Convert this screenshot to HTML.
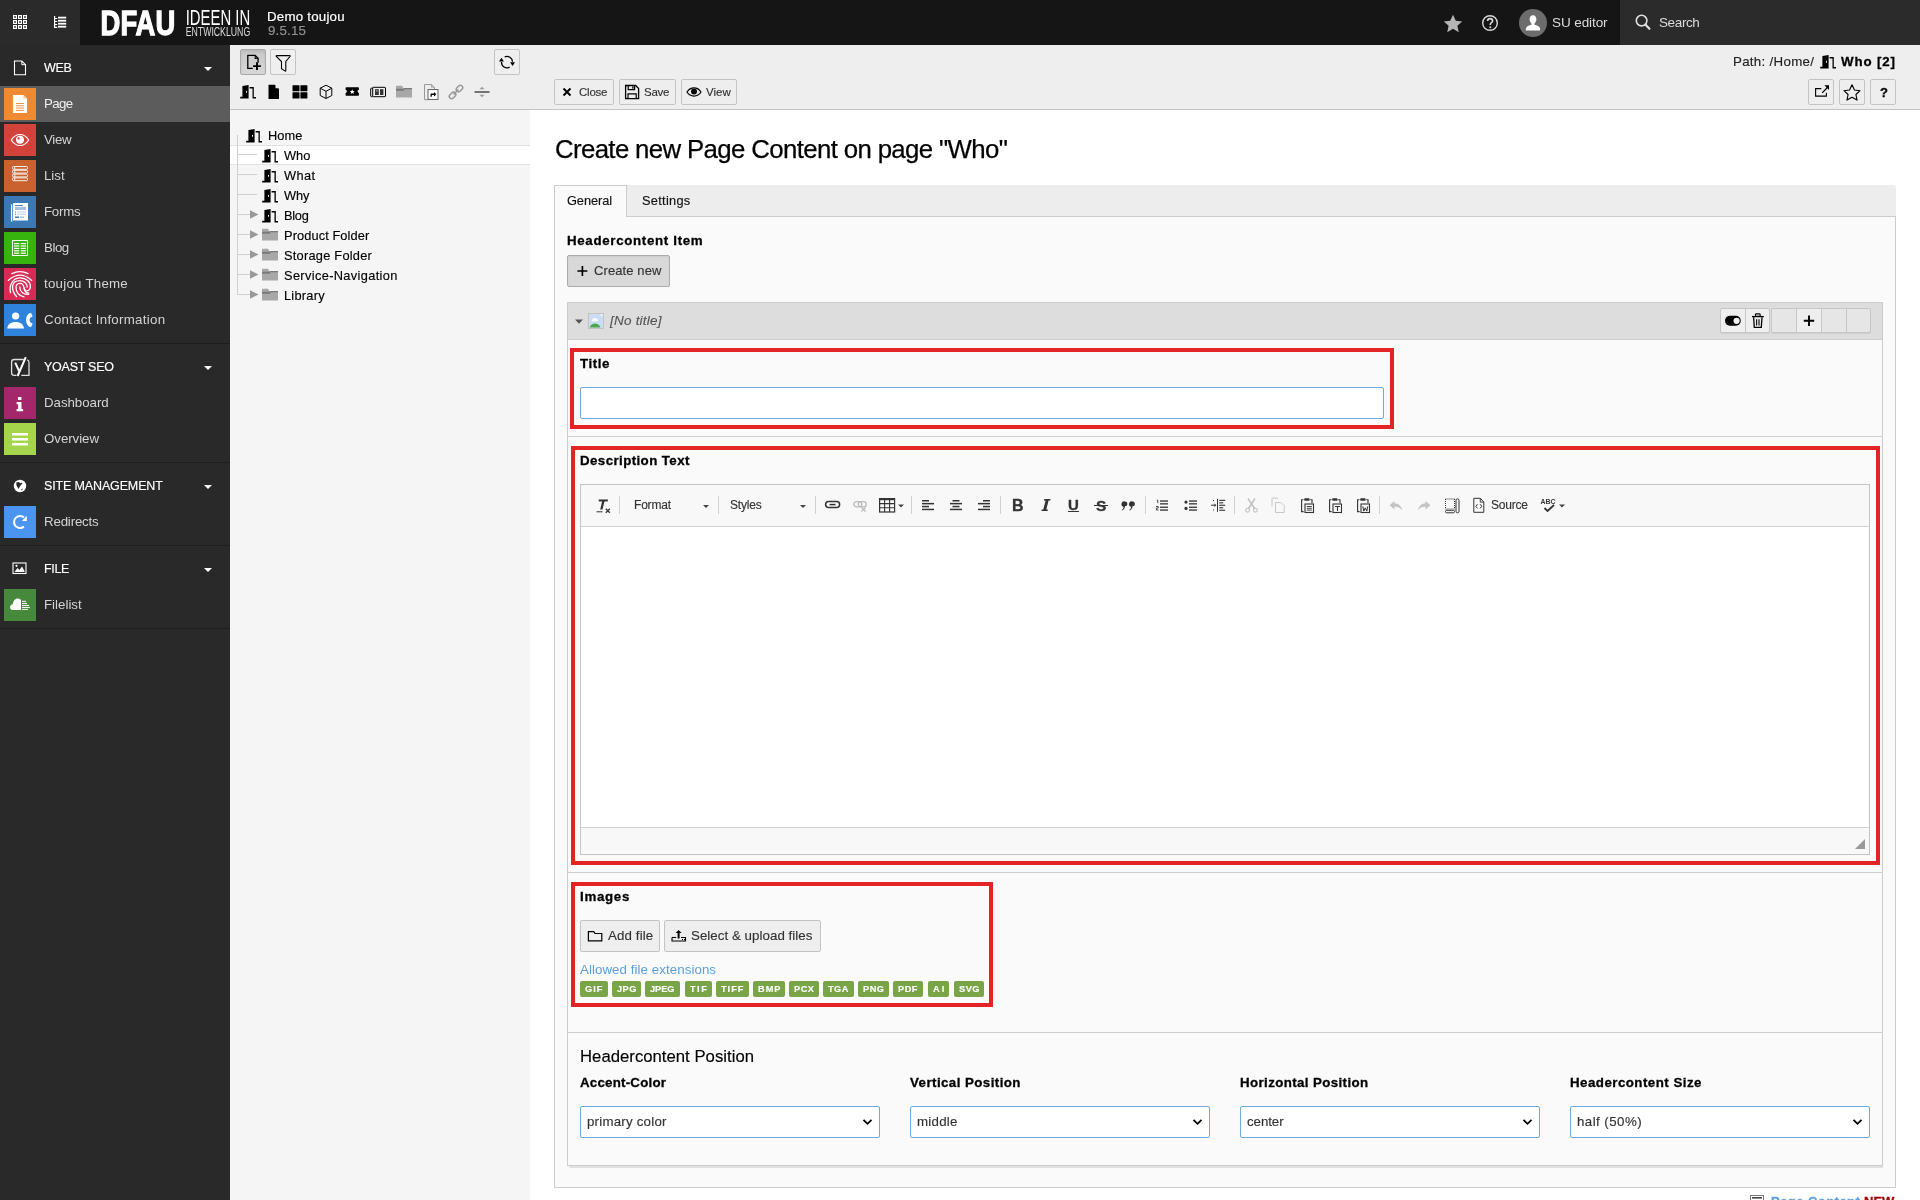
<!DOCTYPE html><html><head><meta charset="utf-8"><style>
*{box-sizing:border-box;margin:0;padding:0}
html,body{width:1920px;height:1200px;overflow:hidden;background:#fff;font-family:"Liberation Sans",sans-serif}
.a{position:absolute}
.t{position:absolute;white-space:nowrap;font-family:"Liberation Sans",sans-serif;will-change:transform}
svg.a{overflow:visible;will-change:transform}
</style></head><body><div class="a" style="left:0px;top:0px;width:1920px;height:45px;background:#151515"></div>
<div class="a" style="left:0px;top:0px;width:80px;height:45px;background:#2a2a2a"></div>
<div class="a" style="left:1620px;top:0px;width:300px;height:45px;background:#2b2b2b"></div>
<svg class="a" style="left:0px;top:0px;" width="40" height="45" viewBox="0 0 40 45"><rect x="13" y="15" width="4" height="4" fill="#fff"/><rect x="14.25" y="16.25" width="1.5" height="1.5" fill="#000"/><rect x="13" y="20" width="4" height="4" fill="#fff"/><rect x="14.25" y="21.25" width="1.5" height="1.5" fill="#000"/><rect x="13" y="25" width="4" height="4" fill="#fff"/><rect x="14.25" y="26.25" width="1.5" height="1.5" fill="#000"/><rect x="18" y="15" width="4" height="4" fill="#fff"/><rect x="19.25" y="16.25" width="1.5" height="1.5" fill="#000"/><rect x="18" y="20" width="4" height="4" fill="#fff"/><rect x="19.25" y="21.25" width="1.5" height="1.5" fill="#000"/><rect x="18" y="25" width="4" height="4" fill="#fff"/><rect x="19.25" y="26.25" width="1.5" height="1.5" fill="#000"/><rect x="23" y="15" width="4" height="4" fill="#fff"/><rect x="24.25" y="16.25" width="1.5" height="1.5" fill="#000"/><rect x="23" y="20" width="4" height="4" fill="#fff"/><rect x="24.25" y="21.25" width="1.5" height="1.5" fill="#000"/><rect x="23" y="25" width="4" height="4" fill="#fff"/><rect x="24.25" y="26.25" width="1.5" height="1.5" fill="#000"/></svg>
<svg class="a" style="left:0px;top:0px;" width="80" height="45" viewBox="0 0 80 45"><path d="M54.6 16v12M54.6 18.5h2.6M54.6 21.5h2.6M54.6 24.5h2.6M54.6 27.4h2.6" stroke="#fff" stroke-width="1.2" fill="none"/><rect x="58" y="16.7" width="8.2" height="1.8" fill="#fff"/><rect x="58" y="19.8" width="8.2" height="1.8" fill="#fff"/><rect x="58" y="22.8" width="8.2" height="1.8" fill="#fff"/><rect x="58" y="25.8" width="8.2" height="1.8" fill="#fff"/></svg>
<svg class="a" style="left:0px;top:0px;" width="300" height="45" viewBox="0 0 300 45"><text x="100.6" y="35.4" font-family="Liberation Sans" font-weight="bold" font-size="35.2" fill="#fff" stroke="#fff" stroke-width="1.3" textLength="74.6" lengthAdjust="spacingAndGlyphs">DFAU</text><text x="185.7" y="25.2" font-family="Liberation Sans" font-size="21.5" fill="#fff" textLength="64.5" lengthAdjust="spacingAndGlyphs">IDEEN IN</text><text x="185.7" y="36.4" font-family="Liberation Sans" font-size="12" fill="#ddd" textLength="64.5" lengthAdjust="spacingAndGlyphs">ENTWICKLUNG</text></svg>
<div class="t" style="left:267.20px;top:10.00px;font-size:13.3px;line-height:13.3px;font-weight:normal;font-style:normal;color:#fff;letter-spacing:0.220px;-webkit-text-stroke:.2px #fff">Demo toujou</div>
<div class="t" style="left:267.50px;top:24.00px;font-size:13.3px;line-height:13.3px;font-weight:normal;font-style:normal;color:#8f8f8f;letter-spacing:0.200px;-webkit-text-stroke:.2px #8f8f8f">9.5.15</div>
<svg class="a" style="left:1440px;top:10px;" width="26" height="26" viewBox="0 0 26 26"><g transform="translate(13 13.4) scale(1.18) translate(-13 -12.5)"><path d="M13 5.2l2.35 5.1 5.45.55-4.1 3.65 1.2 5.4L13 17.1l-4.9 2.8 1.2-5.4-4.1-3.65 5.45-.55z" fill="#b5b5b5"/></g></svg>
<svg class="a" style="left:1478px;top:10px;" width="26" height="26" viewBox="0 0 26 26"><circle cx="12" cy="13" r="7.3" fill="none" stroke="#d9d9d9" stroke-width="1.4"/><path d="M9.6 11.1c0-1.5 1.1-2.5 2.5-2.5s2.5 1 2.5 2.3c0 1.7-2.3 1.9-2.3 3.5v.6" fill="none" stroke="#d9d9d9" stroke-width="1.6"/><circle cx="12.3" cy="17.2" r="1" fill="#d9d9d9"/></svg>
<svg class="a" style="left:1519px;top:9px;" width="28" height="28" viewBox="0 0 28 28"><circle cx="14" cy="14" r="14" fill="#6c6c6c"/><path d="M14 6.3c-2.2 0-3.4 1.7-3.4 4 0 1.8.8 3.4 1.9 4.3v1.1c-2.6.6-5.1 1.4-5.6 3.8l-.1 2h14.4l-.1-2c-.5-2.4-3-3.2-5.6-3.8v-1.1c1.1-.9 1.9-2.5 1.9-4.3 0-2.3-1.2-4-3.4-4z" fill="#fff"/></svg>
<div class="t" style="left:1552.20px;top:16.00px;font-size:13.5px;line-height:13.5px;font-weight:normal;font-style:normal;color:#dcdcdc;letter-spacing:-0.088px;">SU editor</div>
<svg class="a" style="left:1630px;top:10px;" width="26" height="26" viewBox="0 0 26 26"><circle cx="11.6" cy="10.6" r="5.3" fill="none" stroke="#e0e0e0" stroke-width="1.6"/><path d="M15.4 14.6l4 4.2" stroke="#e0e0e0" stroke-width="2.2" stroke-linecap="round"/></svg>
<div class="t" style="left:1659.30px;top:16.00px;font-size:13.5px;line-height:13.5px;font-weight:normal;font-style:normal;color:#dcdcdc;letter-spacing:-0.380px;">Search</div>
<div class="a" style="left:0px;top:45px;width:230px;height:1155px;background:#292929"></div>
<svg class="a" style="left:0px;top:45px;" width="40" height="41" viewBox="0 0 40 41"><path d="M14.5 16h7.3l3.7 3.7v10H14.5z" fill="none" stroke="#fff" stroke-width="1.1"/><path d="M21.8 16v3.7h3.7" fill="none" stroke="#fff" stroke-width="1"/></svg>
<div class="t" style="left:44.00px;top:62.00px;font-size:12.5px;line-height:12.5px;font-weight:normal;font-style:normal;color:#fff;letter-spacing:-0.350px;-webkit-text-stroke:.15px #fff">WEB</div>
<svg class="a" style="left:200px;top:64.5px;" width="16" height="8" viewBox="0 0 16 8"><path d="M4 2h8l-4 4z" fill="#fff"/></svg>
<div class="a" style="left:0px;top:86px;width:230px;height:36px;background:#5c5c5c"></div>
<div class="a" style="left:4px;top:88px;width:32px;height:32px;background:#ef8a33"></div>
<svg class="a" style="left:4px;top:88px;" width="32" height="32" viewBox="0 0 32 32"><path d="M9 7h10.5l3.5 3.5V25H9z" fill="#fff"/><path d="M19.5 7v3.5H23z" fill="#f6c79a"/><path d="M12 15.5h8M12 17.8h8M12 20.1h8M12 22.4h8" stroke="#ef8a33" stroke-width=".9"/></svg>
<div class="t" style="left:44.00px;top:97.00px;font-size:13.3px;line-height:13.3px;font-weight:normal;font-style:normal;color:#f0f0f0;letter-spacing:-0.667px;">Page</div>
<div class="a" style="left:4px;top:124px;width:32px;height:32px;background:#d4433b"></div>
<svg class="a" style="left:4px;top:124px;" width="32" height="32" viewBox="0 0 32 32"><path d="M7.3 16c2.3-3.6 5.4-5.5 8.7-5.5s6.4 1.9 8.7 5.5c-2.3 3.6-5.4 5.5-8.7 5.5s-6.4-1.9-8.7-5.5z" fill="none" stroke="#fff" stroke-width="1.2"/><circle cx="16" cy="15.8" r="4" fill="#fff"/><circle cx="14.6" cy="14.4" r="1.2" fill="#d4433b"/></svg>
<div class="t" style="left:44.00px;top:133.00px;font-size:13.3px;line-height:13.3px;font-weight:normal;font-style:normal;color:#d4d4d4;letter-spacing:-0.333px;">View</div>
<div class="a" style="left:4px;top:160px;width:32px;height:32px;background:#c9622f"></div>
<svg class="a" style="left:4px;top:160px;" width="32" height="32" viewBox="0 0 32 32"><rect x="8.5" y="6.50" width="15" height="2.8" rx="1" fill="none" stroke="#fff" stroke-width=".9"/><path d="M10.8 6.50v2.8" stroke="#fff" stroke-width=".9"/><rect x="8.5" y="10.30" width="15" height="2.8" rx="1" fill="none" stroke="#fff" stroke-width=".9"/><path d="M10.8 10.30v2.8" stroke="#fff" stroke-width=".9"/><rect x="8.5" y="14.10" width="15" height="2.8" rx="1" fill="none" stroke="#fff" stroke-width=".9"/><path d="M10.8 14.10v2.8" stroke="#fff" stroke-width=".9"/><rect x="8.5" y="17.90" width="15" height="2.8" rx="1" fill="none" stroke="#fff" stroke-width=".9"/><path d="M10.8 17.90v2.8" stroke="#fff" stroke-width=".9"/></svg>
<div class="t" style="left:44.00px;top:169.00px;font-size:13.3px;line-height:13.3px;font-weight:normal;font-style:normal;color:#d4d4d4;letter-spacing:-0.033px;">List</div>
<div class="a" style="left:4px;top:196px;width:32px;height:32px;background:#3d7ab5"></div>
<svg class="a" style="left:4px;top:196px;" width="32" height="32" viewBox="0 0 32 32"><path d="M7 8.5v17h1.2V8.5z" fill="#fff"/><rect x="9" y="7" width="15" height="17.5" fill="#fff"/><rect x="11" y="9" width="8" height=".9" fill="#3d7ab5"/><rect x="11" y="10.8" width="11" height="3.2" fill="#a8c2dd"/><rect x="11" y="15.6" width="1" height="1" fill="#3d7ab5"/><rect x="13" y="15.6" width="9" height=".8" fill="#a8c2dd"/><rect x="11" y="17.8" width="1" height="1" fill="#3d7ab5"/><rect x="13" y="17.8" width="9" height=".8" fill="#a8c2dd"/><rect x="11" y="20.5" width="4" height="1.5" fill="#3d7ab5"/><rect x="16" y="20.5" width="4" height="1.5" fill="#a8c2dd"/></svg>
<div class="t" style="left:44.00px;top:205.00px;font-size:13.3px;line-height:13.3px;font-weight:normal;font-style:normal;color:#d4d4d4;letter-spacing:-0.250px;">Forms</div>
<div class="a" style="left:4px;top:232px;width:32px;height:32px;background:#37b40d"></div>
<svg class="a" style="left:4px;top:232px;" width="32" height="32" viewBox="0 0 32 32"><rect x="8.5" y="8.5" width="15" height="15" fill="none" stroke="#fff" stroke-width="1"/><rect x="10" y="11.0" width="5.3" height="1.2" fill="#fff"/><rect x="16.7" y="11.0" width="5.3" height="1.2" fill="#fff"/><rect x="10" y="13.4" width="5.3" height="1.2" fill="#fff"/><rect x="16.7" y="13.4" width="5.3" height="1.2" fill="#fff"/><rect x="10" y="15.8" width="5.3" height="1.2" fill="#fff"/><rect x="16.7" y="15.8" width="5.3" height="1.2" fill="#fff"/><rect x="10" y="18.2" width="5.3" height="1.2" fill="#fff"/><rect x="16.7" y="18.2" width="5.3" height="1.2" fill="#fff"/><rect x="10" y="20.6" width="5.3" height="1.2" fill="#fff"/><rect x="16.7" y="20.6" width="5.3" height="1.2" fill="#fff"/></svg>
<div class="t" style="left:44.00px;top:241.00px;font-size:13.3px;line-height:13.3px;font-weight:normal;font-style:normal;color:#d4d4d4;letter-spacing:-0.467px;">Blog</div>
<div class="a" style="left:4px;top:268px;width:32px;height:32px;background:#d72a55"></div>
<svg class="a" style="left:4px;top:268px;" width="32" height="32" viewBox="0 0 32 32"><g fill="none" stroke="#fff" stroke-width="1.3" stroke-linecap="round"><path d="M8 5.6Q16 1.6 24 5.6"/><path d="M4.3 12.4Q16 1.8 27.7 12.4"/><path d="M6.5 24.6C4.8 15.5 9.8 9.8 16 9.8c6.3 0 10.6 4.3 10.4 9.3-.2 3-2.6 4.4-4.6 3.5-1.2-.6-1.6-1.7-1.8-3"/><path d="M12.6 28.5C9.7 25.5 8.4 22 8.6 18.3 8.9 14.7 12 12.6 16 12.6c4.3 0 7.2 2.9 7.3 6.6"/><path d="M20 28.8c-4.5-.9-7.8-4.4-8-9.3-.1-2.5 1.7-4.1 4-4.1 2.4 0 3.6 1.8 3.9 4.2.4 3.2 2.2 5.4 4.9 5.6"/><path d="M15.8 19c.1 4.5 3.2 7.7 8.8 7.3"/></g></svg>
<div class="t" style="left:44.00px;top:277.00px;font-size:13.3px;line-height:13.3px;font-weight:normal;font-style:normal;color:#d4d4d4;letter-spacing:0.245px;">toujou Theme</div>
<div class="a" style="left:4px;top:304px;width:32px;height:32px;background:#2f83dd"></div>
<svg class="a" style="left:4px;top:304px;" width="32" height="32" viewBox="0 0 32 32"><circle cx="11.6" cy="12" r="3.6" fill="#fff"/><path d="M3.3 24.6c0-4 3.6-6.6 8.3-6.6s8.3 2.6 8.3 6.6z" fill="#fff"/><path d="M27.6 9.6l-1.9-.5c-2.4 1.4-3.7 4-3.7 6.9s1.3 5.5 3.7 6.9l1.9-.5.9-3.1-2.1-.8c-.5-.8-.8-1.6-.8-2.5s.3-1.7.8-2.5l2.1-.8z" fill="#fff"/></svg>
<div class="t" style="left:44.00px;top:313.00px;font-size:13.3px;line-height:13.3px;font-weight:normal;font-style:normal;color:#d4d4d4;letter-spacing:0.278px;">Contact Information</div>
<div class="a" style="left:0px;top:343px;width:230px;height:1px;background:#1e1e1e"></div>
<svg class="a" style="left:0px;top:344px;" width="40" height="41" viewBox="0 0 40 41"><path d="M23.8 15.5h-9.6a2.6 2.6 0 0 0-2.6 2.6v10.7a2.6 2.6 0 0 0 2.6 2.6h2.3M21.3 31.4h7.7V18.3a2.6 2.6 0 0 0-1.8-2.5" fill="none" stroke="#e0e0e0" stroke-width="1.3"/><path d="M15.2 18.6l4.3 9.2M25.8 13.2L17.6 32" fill="none" stroke="#fff" stroke-width="2"/></svg>
<div class="t" style="left:44.00px;top:361.00px;font-size:12.5px;line-height:12.5px;font-weight:normal;font-style:normal;color:#fff;letter-spacing:-0.250px;-webkit-text-stroke:.15px #fff">YOAST SEO</div>
<svg class="a" style="left:200px;top:363.5px;" width="16" height="8" viewBox="0 0 16 8"><path d="M4 2h8l-4 4z" fill="#fff"/></svg>
<div class="a" style="left:4px;top:387px;width:32px;height:32px;background:#a3276a"></div>
<svg class="a" style="left:4px;top:387px;" width="32" height="32" viewBox="0 0 32 32"><rect x="14" y="10" width="3.5" height="3" fill="#fff"/><path d="M12.6 15h4.9v7h1.6v2.3h-6.5V22h1.5v-4.7h-1.5z" fill="#fff"/></svg>
<div class="t" style="left:44.00px;top:396.00px;font-size:13.3px;line-height:13.3px;font-weight:normal;font-style:normal;color:#d4d4d4;letter-spacing:-0.050px;">Dashboard</div>
<div class="a" style="left:4px;top:423px;width:32px;height:32px;background:#a5d54b"></div>
<svg class="a" style="left:4px;top:423px;" width="32" height="32" viewBox="0 0 32 32"><rect x="8" y="10" width="16" height="2.5" fill="#fff"/><rect x="8" y="15" width="16" height="2.5" fill="#fff"/><rect x="8" y="20" width="16" height="2.5" fill="#fff"/></svg>
<div class="t" style="left:44.00px;top:432.00px;font-size:13.3px;line-height:13.3px;font-weight:normal;font-style:normal;color:#d4d4d4;letter-spacing:-0.057px;">Overview</div>
<div class="a" style="left:0px;top:462px;width:230px;height:1px;background:#1e1e1e"></div>
<svg class="a" style="left:0px;top:463px;" width="40" height="41" viewBox="0 0 40 41"><circle cx="20" cy="23" r="6.2" fill="#fff"/><path d="M16.2 19.6l2.6-.6 1.4 1.2 1-.6.6.7 1-.4-2.6 3-1 1.8-.9 1.4-.8-2.2-1-1.4z" fill="#292929"/><path d="M21.3 26.2l1.4-.5-.4 1.2-.9.4z" fill="#292929"/></svg>
<div class="t" style="left:44.00px;top:480.00px;font-size:12.5px;line-height:12.5px;font-weight:normal;font-style:normal;color:#fff;letter-spacing:-0.143px;-webkit-text-stroke:.15px #fff">SITE MANAGEMENT</div>
<svg class="a" style="left:200px;top:482.5px;" width="16" height="8" viewBox="0 0 16 8"><path d="M4 2h8l-4 4z" fill="#fff"/></svg>
<div class="a" style="left:4px;top:506px;width:32px;height:32px;background:#4b94ef"></div>
<svg class="a" style="left:4px;top:506px;" width="32" height="32" viewBox="0 0 32 32"><path d="M19.9 11.4A6 6 0 1 0 19.9 20.6" fill="none" stroke="#fff" stroke-width="2.1"/><path d="M22.8 9.8V15h-4.9z" fill="#fff"/></svg>
<div class="t" style="left:44.00px;top:515.00px;font-size:13.3px;line-height:13.3px;font-weight:normal;font-style:normal;color:#d4d4d4;letter-spacing:-0.175px;">Redirects</div>
<div class="a" style="left:0px;top:545px;width:230px;height:1px;background:#1e1e1e"></div>
<svg class="a" style="left:0px;top:546px;" width="40" height="41" viewBox="0 0 40 41"><rect x="13" y="17" width="13" height="10.5" fill="none" stroke="#fff" stroke-width="1.1"/><path d="M14.5 26l3-4 2 2 2.5-3.5 2.5 4.5v1z" fill="#fff"/><circle cx="16.5" cy="19.8" r="1.1" fill="#fff"/></svg>
<div class="t" style="left:44.00px;top:563.00px;font-size:12.5px;line-height:12.5px;font-weight:normal;font-style:normal;color:#fff;letter-spacing:-0.333px;-webkit-text-stroke:.15px #fff">FILE</div>
<svg class="a" style="left:200px;top:565.5px;" width="16" height="8" viewBox="0 0 16 8"><path d="M4 2h8l-4 4z" fill="#fff"/></svg>
<div class="a" style="left:4px;top:589px;width:32px;height:32px;background:#47893a"></div>
<svg class="a" style="left:4px;top:589px;" width="32" height="32" viewBox="0 0 32 32"><path d="M17 21.1H9c-1.8 0-2.9-1.3-2.9-2.9 0-1.6 1.2-2.8 2.7-2.9.4-3.3 2.2-5.7 5-5.7 1.7 0 3.2.9 3.2 1.9z" fill="#fff"/><rect x="18" y="11.8" width="4" height="1" fill="#fff"/><rect x="18" y="13.9" width="5" height="1" fill="#fff"/><rect x="18" y="15.9" width="7" height="1" fill="#fff"/><rect x="18" y="17.9" width="7.8" height="1" fill="#fff"/><rect x="18" y="19.9" width="6" height="1" fill="#fff"/></svg>
<div class="t" style="left:44.00px;top:598.00px;font-size:13.3px;line-height:13.3px;font-weight:normal;font-style:normal;color:#d4d4d4;letter-spacing:0.000px;">Filelist</div>
<div class="a" style="left:0px;top:628px;width:230px;height:1px;background:#1e1e1e"></div>
<div class="a" style="left:230px;top:45px;width:300px;height:1155px;background:#f5f5f5"></div>
<div class="a" style="left:230px;top:45px;width:300px;height:65px;background:#eeeeee;border-bottom:1px solid #c3c3c3"></div>
<div class="a" style="left:240px;top:49px;width:26px;height:26px;background:linear-gradient(#c9c9c9,#d6d6d6);border:1px solid #a9a9a9;border-radius:2px;box-shadow:inset 0 2px 3px rgba(0,0,0,.08)"></div>
<svg class="a" style="left:240px;top:49px;" width="26" height="26" viewBox="0 0 26 26"><path d="M18.1 13.8V9.3l-3-3H7.8v13.1h5" fill="none" stroke="#000" stroke-width="1.3"/><path d="M15.2 6.4v3.1h2.9" fill="none" stroke="#000" stroke-width="1.1"/><path d="M17 13.2v7.8M13.1 17.1h7.8" stroke="#000" stroke-width="1.9"/></svg>
<div class="a" style="left:270px;top:49px;width:26px;height:26px;background:#efefef;border:1px solid #c4c4c4;border-radius:2px"></div>
<svg class="a" style="left:270px;top:49px;" width="26" height="26" viewBox="0 0 26 26"><path d="M6.5 6.6h13.2c.5 0 .6.5.3.9L15.8 12.5v9.2c0 .4-.3.6-.6.4l-3.7-2.5V12.5L6.3 7.5c-.3-.4-.2-.9.2-.9z" fill="none" stroke="#000" stroke-width="1.1"/></svg>
<div class="a" style="left:494px;top:49px;width:26px;height:26px;background:#efefef;border:1px solid #c4c4c4;border-radius:2px"></div>
<svg class="a" style="left:494px;top:49px;" width="26" height="26" viewBox="0 0 26 26"><path d="M10.7 7.9A5.5 5.5 0 0 1 18.5 12.8M15.7 18.1A5.5 5.5 0 0 1 7.5 13" fill="none" stroke="#000" stroke-width="1.3"/><path d="M16.1 13.2h4.9l-2.45 3.7zM5 12.5h4.9L7.45 8.8z" fill="#000"/></svg>
<svg class="a" style="left:240px;top:84px;" width="16" height="16" viewBox="0 0 16 16"><path d="M2.4 2.1l6.2-1v13.4H0.2v-1.7h2.2z" fill="#000"/><rect x="6" y="6.9" width="1" height="1.8" fill="#eee"/><path d="M9.6 3h4.2v10.1h2.2v1.5h-3.5V4.4h-2.9z" fill="#000"/></svg>
<svg class="a" style="left:268px;top:84px;" width="16" height="16" viewBox="0 0 16 16"><path d="M0.5 0.8h6.5l4 4v10.1H0.5z" fill="#000"/><path d="M7.5 0.8v3.5h3.5z" fill="#eee"/></svg>
<svg class="a" style="left:292px;top:84px;" width="16" height="16" viewBox="0 0 16 16"><rect x="0.5" y="1.3" width="7" height="6" rx=".5" fill="#000"/><rect x="8.4" y="1.3" width="7" height="6" rx=".5" fill="#000"/><rect x="0.5" y="8.2" width="7" height="6.2" rx=".5" fill="#000"/><rect x="8.4" y="8.2" width="7" height="6.2" rx=".5" fill="#000"/></svg>
<svg class="a" style="left:318px;top:84px;" width="16" height="16" viewBox="0 0 16 16"><path d="M8 1.2l5.8 3v7.3L8 14.5 2.2 11.5V4.2z" fill="none" stroke="#000" stroke-width="1"/><path d="M2.2 4.2L8 7.3l5.8-3.1M8 7.3v7.2" fill="none" stroke="#000" stroke-width="1"/></svg>
<svg class="a" style="left:344px;top:84px;" width="16" height="16" viewBox="0 0 16 16"><path d="M2.2 3.2h12c.5 0 .7.3.7.7v1.8c-.8.2-1.3.8-1.3 1.6s.5 1.5 1.3 1.7v2c0 .4-.2.7-.7.7h-12c-.4 0-.6-.3-.6-.7v-2c.8-.2 1.3-.9 1.3-1.7s-.5-1.4-1.3-1.6V3.9c0-.4.2-.7.6-.7z" fill="#000"/><path d="M8.2 5.3l.8 1.6 1.7.2-1.3 1.1.4 1.7-1.6-.9-1.5.9.4-1.7-1.3-1.1 1.7-.2z" fill="#fff"/></svg>
<svg class="a" style="left:370px;top:84px;" width="16" height="16" viewBox="0 0 16 16"><rect x="2.7" y="3.3" width="12.8" height="9.4" rx=".6" fill="none" stroke="#000" stroke-width="1"/><path d="M2.7 4.2H1.2c-.3 0-.5.3-.5.6v7.2c0 .4.3.7.6.7h1.4" fill="none" stroke="#000" stroke-width="1"/><rect x="5" y="5.2" width="3.8" height="5.8" fill="#333"/><rect x="10" y="5.2" width="3.4" height="5.8" fill="#333"/><rect x="5.8" y="6" width="2.2" height="1.8" fill="#777"/></svg>
<svg class="a" style="left:396px;top:85.4px;" width="16" height="16" viewBox="0 0 16 16"><path d="M0 0.8h6l1.5 2.5H16v9.1H0z" fill="#a8a8a8"/><path d="M0 3.7h7.6l.8-.6H16v1.1H8.7l-.8 1.5H0z" fill="#7a7a7a"/></svg>
<svg class="a" style="left:424px;top:84px;" width="16" height="16" viewBox="0 0 16 16"><path d="M0.5 0.5h7l2.8 2.8v4.2" fill="none" stroke="#999" stroke-width="1"/><path d="M0.5 0.5v15.2h3.5" fill="none" stroke="#999" stroke-width="1"/><path d="M7.5 0.5v2.8h2.8" fill="none" stroke="#999" stroke-width=".8"/><rect x="4" y="5.5" width="10" height="10" fill="#fff" stroke="#666" stroke-width="1"/><path d="M6.5 12.8v-2c0-.8.5-1.3 1.3-1.3h2.2V8l2.3 2.3-2.3 2.3v-1.5H8.2c-.3 0-.4.1-.4.4v1.3z" fill="#000"/></svg>
<svg class="a" style="left:448px;top:84px;" width="16" height="16" viewBox="0 0 16 16"><g transform="rotate(-45 8 8)" fill="none" stroke="#999" stroke-width="1.5"><rect x="-0.5" y="5.7" width="7.2" height="4.6" rx="2.3"/><rect x="9.3" y="5.7" width="7.2" height="4.6" rx="2.3"/><path d="M4.5 8h7"/></g></svg>
<svg class="a" style="left:474px;top:84px;" width="16" height="16" viewBox="0 0 16 16"><rect x="0.5" y="7.2" width="15" height="1.6" fill="#555"/><path d="M5.5 5.3L8 2.8l2.5 2.5zM5.5 10.7L8 13.2l2.5-2.5z" fill="#999"/></svg>
<div class="a" style="left:230px;top:145px;width:300px;height:20px;background:#fff;border-top:1px solid #e2e2e2;border-bottom:1px solid #e2e2e2"></div>
<div class="a" style="left:237px;top:135px;width:1px;height:160px;background:#d0d0d0"></div>
<div class="a" style="left:238px;top:154px;width:19px;height:1px;background:#d0d0d0"></div>
<div class="a" style="left:238px;top:174px;width:19px;height:1px;background:#d0d0d0"></div>
<div class="a" style="left:238px;top:194px;width:19px;height:1px;background:#d0d0d0"></div>
<div class="a" style="left:238px;top:214px;width:12px;height:1px;background:#d0d0d0"></div>
<div class="a" style="left:238px;top:234px;width:12px;height:1px;background:#d0d0d0"></div>
<div class="a" style="left:238px;top:254px;width:12px;height:1px;background:#d0d0d0"></div>
<div class="a" style="left:238px;top:274px;width:12px;height:1px;background:#d0d0d0"></div>
<div class="a" style="left:238px;top:294px;width:12px;height:1px;background:#d0d0d0"></div>
<svg class="a" style="left:246px;top:128px;" width="16" height="16" viewBox="0 0 16 16"><path d="M2.4 2.1l6.2-1v13.4H0.2v-1.7h2.2z" fill="#000"/><rect x="6" y="6.9" width="1" height="1.8" fill="#f5f5f5"/><path d="M9.6 3h4.2v10.1h2.2v1.5h-3.5V4.4h-2.9z" fill="#000"/></svg>
<div class="t" style="left:267.60px;top:130.00px;font-size:12.8px;line-height:12.8px;font-weight:normal;font-style:normal;color:#000;letter-spacing:0.100px;;-webkit-text-stroke:.15px #000">Home</div>
<svg class="a" style="left:262px;top:148px;" width="16" height="16" viewBox="0 0 16 16"><path d="M2.4 2.1l6.2-1v13.4H0.2v-1.7h2.2z" fill="#000"/><rect x="6" y="6.9" width="1" height="1.8" fill="#fff"/><path d="M9.6 3h4.2v10.1h2.2v1.5h-3.5V4.4h-2.9z" fill="#000"/></svg>
<div class="t" style="left:284.30px;top:150.00px;font-size:12.8px;line-height:12.8px;font-weight:normal;font-style:normal;color:#000;letter-spacing:0.000px;;-webkit-text-stroke:.15px #000">Who</div>
<svg class="a" style="left:262px;top:168px;" width="16" height="16" viewBox="0 0 16 16"><path d="M2.4 2.1l6.2-1v13.4H0.2v-1.7h2.2z" fill="#000"/><rect x="6" y="6.9" width="1" height="1.8" fill="#f5f5f5"/><path d="M9.6 3h4.2v10.1h2.2v1.5h-3.5V4.4h-2.9z" fill="#000"/></svg>
<div class="t" style="left:284.30px;top:170.00px;font-size:12.8px;line-height:12.8px;font-weight:normal;font-style:normal;color:#000;letter-spacing:0.400px;;-webkit-text-stroke:.15px #000">What</div>
<svg class="a" style="left:262px;top:188px;" width="16" height="16" viewBox="0 0 16 16"><path d="M2.4 2.1l6.2-1v13.4H0.2v-1.7h2.2z" fill="#000"/><rect x="6" y="6.9" width="1" height="1.8" fill="#f5f5f5"/><path d="M9.6 3h4.2v10.1h2.2v1.5h-3.5V4.4h-2.9z" fill="#000"/></svg>
<div class="t" style="left:284.30px;top:190.00px;font-size:12.8px;line-height:12.8px;font-weight:normal;font-style:normal;color:#000;letter-spacing:-0.150px;;-webkit-text-stroke:.15px #000">Why</div>
<svg class="a" style="left:262px;top:208px;" width="16" height="16" viewBox="0 0 16 16"><path d="M2.4 2.1l6.2-1v13.4H0.2v-1.7h2.2z" fill="#000"/><rect x="6" y="6.9" width="1" height="1.8" fill="#f5f5f5"/><path d="M9.6 3h4.2v10.1h2.2v1.5h-3.5V4.4h-2.9z" fill="#000"/></svg>
<svg class="a" style="left:249px;top:210px;" width="10" height="10" viewBox="0 0 10 10"><path d="M1 0.3l8.5 4.2L1 8.8z" fill="#999"/></svg>
<div class="t" style="left:284.30px;top:210.00px;font-size:12.8px;line-height:12.8px;font-weight:normal;font-style:normal;color:#000;letter-spacing:-0.267px;;-webkit-text-stroke:.15px #000">Blog</div>
<svg class="a" style="left:262px;top:228px;" width="16" height="16" viewBox="0 0 16 16"><path d="M0 0.8h6l1.5 2.5H16v9.1H0z" fill="#a8a8a8"/><path d="M0 3.7h7.6l.8-.6H16v1.1H8.7l-.8 1.5H0z" fill="#7a7a7a"/></svg>
<svg class="a" style="left:249px;top:230px;" width="10" height="10" viewBox="0 0 10 10"><path d="M1 0.3l8.5 4.2L1 8.8z" fill="#999"/></svg>
<div class="t" style="left:284.30px;top:230.00px;font-size:12.8px;line-height:12.8px;font-weight:normal;font-style:normal;color:#000;letter-spacing:0.100px;;-webkit-text-stroke:.15px #000">Product Folder</div>
<svg class="a" style="left:262px;top:248px;" width="16" height="16" viewBox="0 0 16 16"><path d="M0 0.8h6l1.5 2.5H16v9.1H0z" fill="#a8a8a8"/><path d="M0 3.7h7.6l.8-.6H16v1.1H8.7l-.8 1.5H0z" fill="#7a7a7a"/></svg>
<svg class="a" style="left:249px;top:250px;" width="10" height="10" viewBox="0 0 10 10"><path d="M1 0.3l8.5 4.2L1 8.8z" fill="#999"/></svg>
<div class="t" style="left:284.30px;top:250.00px;font-size:12.8px;line-height:12.8px;font-weight:normal;font-style:normal;color:#000;letter-spacing:0.246px;;-webkit-text-stroke:.15px #000">Storage Folder</div>
<svg class="a" style="left:262px;top:268px;" width="16" height="16" viewBox="0 0 16 16"><path d="M0 0.8h6l1.5 2.5H16v9.1H0z" fill="#a8a8a8"/><path d="M0 3.7h7.6l.8-.6H16v1.1H8.7l-.8 1.5H0z" fill="#7a7a7a"/></svg>
<svg class="a" style="left:249px;top:270px;" width="10" height="10" viewBox="0 0 10 10"><path d="M1 0.3l8.5 4.2L1 8.8z" fill="#999"/></svg>
<div class="t" style="left:284.30px;top:270.00px;font-size:12.8px;line-height:12.8px;font-weight:normal;font-style:normal;color:#000;letter-spacing:0.353px;;-webkit-text-stroke:.15px #000">Service-Navigation</div>
<svg class="a" style="left:262px;top:288px;" width="16" height="16" viewBox="0 0 16 16"><path d="M0 0.8h6l1.5 2.5H16v9.1H0z" fill="#a8a8a8"/><path d="M0 3.7h7.6l.8-.6H16v1.1H8.7l-.8 1.5H0z" fill="#7a7a7a"/></svg>
<svg class="a" style="left:249px;top:290px;" width="10" height="10" viewBox="0 0 10 10"><path d="M1 0.3l8.5 4.2L1 8.8z" fill="#999"/></svg>
<div class="t" style="left:284.30px;top:290.00px;font-size:12.8px;line-height:12.8px;font-weight:normal;font-style:normal;color:#000;letter-spacing:0.250px;;-webkit-text-stroke:.15px #000">Library</div>
<div class="a" style="left:530px;top:45px;width:1390px;height:65px;background:#eeeeee;border-bottom:1px solid #c3c3c3"></div>
<div class="a" style="left:554px;top:79px;width:60px;height:26px;background:#eeeeee;border:1px solid #c4c4c4;border-radius:2px"></div>
<svg class="a" style="left:554px;top:79px;" width="26" height="26" viewBox="0 0 26 26"><path d="M9.5 9.5l7 7M16.5 9.5l-7 7" stroke="#000" stroke-width="1.9"/></svg>
<div class="t" style="left:578.90px;top:87.00px;font-size:11.5px;line-height:11.5px;font-weight:normal;font-style:normal;color:#333;letter-spacing:-0.225px;;-webkit-text-stroke:.15px #333">Close</div>
<div class="a" style="left:619px;top:79px;width:57px;height:26px;background:#eeeeee;border:1px solid #c4c4c4;border-radius:2px"></div>
<svg class="a" style="left:619px;top:79px;" width="26" height="26" viewBox="0 0 26 26"><path d="M6.6 6.5h10l3 3v10.2H6.6z" fill="none" stroke="#000" stroke-width="1.3"/><path d="M9.2 6.5v4.1h6.4V6.5" fill="none" stroke="#000" stroke-width="1.2"/><rect x="13.2" y="7.3" width="1.3" height="2.4" fill="#000"/><path d="M9 19.6v-4.7h8.2v4.7" fill="none" stroke="#000" stroke-width="1.2"/></svg>
<div class="t" style="left:643.80px;top:87.00px;font-size:11.5px;line-height:11.5px;font-weight:normal;font-style:normal;color:#333;letter-spacing:-0.250px;;-webkit-text-stroke:.15px #333">Save</div>
<div class="a" style="left:681px;top:79px;width:56px;height:26px;background:#eeeeee;border:1px solid #c4c4c4;border-radius:2px"></div>
<svg class="a" style="left:681px;top:79px;" width="26" height="26" viewBox="0 0 26 26"><path d="M6 13c1.7-2.7 4.2-4.1 7-4.1s5.3 1.4 7 4.1c-1.7 2.7-4.2 4.1-7 4.1S7.7 15.7 6 13z" fill="none" stroke="#000" stroke-width="1.2"/><circle cx="13" cy="12.6" r="3" fill="#000"/></svg>
<div class="t" style="left:705.90px;top:87.00px;font-size:11.5px;line-height:11.5px;font-weight:normal;font-style:normal;color:#333;letter-spacing:0.000px;;-webkit-text-stroke:.15px #333">View</div>
<div class="t" style="left:1732.70px;top:55.00px;font-size:13.3px;line-height:13.3px;font-weight:normal;font-style:normal;color:#222;letter-spacing:0.300px;;-webkit-text-stroke:.15px #222">Path: /Home/</div>
<svg class="a" style="left:1820px;top:54px;" width="16" height="16" viewBox="0 0 16 16"><path d="M2.4 2.1l6.2-1v13.4H0.2v-1.7h2.2z" fill="#000"/><rect x="6" y="6.9" width="1" height="1.8" fill="#eee"/><path d="M9.6 3h4.2v10.1h2.2v1.5h-3.5V4.4h-2.9z" fill="#000"/></svg>
<div class="t" style="left:1840.80px;top:55.00px;font-size:13.3px;line-height:13.3px;font-weight:bold;font-style:normal;color:#000;letter-spacing:0.867px;;-webkit-text-stroke:.3px #000">Who [2]</div>
<div class="a" style="left:1808px;top:79px;width:26px;height:26px;background:#eeeeee;border:1px solid #c4c4c4;border-radius:2px"></div>
<svg class="a" style="left:1808px;top:79px;" width="26" height="26" viewBox="0 0 26 26"><path d="M13.3 9.6H7.6v7.5h10.8v-3.4" fill="none" stroke="#000" stroke-width="1.1"/><path d="M14.2 13.8l5.2-5.3" stroke="#000" stroke-width="1.2"/><path d="M16.4 6.3h4.6v4.6z" fill="#000"/></svg>
<div class="a" style="left:1839px;top:79px;width:26px;height:26px;background:#eeeeee;border:1px solid #c4c4c4;border-radius:2px"></div>
<svg class="a" style="left:1839px;top:79px;" width="26" height="26" viewBox="0 0 26 26"><g transform="translate(13 13.6) scale(1.12) translate(-13 -12.6)"><path d="M13 5.6l2.2 4.7 5 .6-3.7 3.4 1 5-4.5-2.5-4.5 2.5 1-5-3.7-3.4 5-.6z" fill="none" stroke="#000" stroke-width="1" stroke-linejoin="round"/></g></svg>
<div class="a" style="left:1870px;top:79px;width:26px;height:26px;background:#eeeeee;border:1px solid #c4c4c4;border-radius:2px"></div>
<div class="t" style="left:1880.00px;top:86.00px;font-size:13px;line-height:13px;font-weight:bold;font-style:normal;color:#000;letter-spacing:0.000px;;-webkit-text-stroke:.3px #000">?</div>
<div class="t" style="left:555.00px;top:137.00px;font-size:25.8px;line-height:25.8px;font-weight:normal;font-style:normal;color:#000;letter-spacing:-0.639px;-webkit-text-stroke:.25px #000">Create new Page Content on page "Who"</div>
<div class="a" style="left:554px;top:185px;width:1342px;height:32px;background:#ededed;border-bottom:1px solid #cccccc;border-top-right-radius:3px"></div>
<div class="a" style="left:554px;top:217px;width:1342px;height:971px;background:#fafafa;border:1px solid #cccccc;border-top:none"></div>
<div class="a" style="left:554px;top:185px;width:73px;height:32px;background:#fafafa;border:1px solid #cccccc;border-bottom:none"></div>
<div class="t" style="left:566.60px;top:195.00px;font-size:12.8px;line-height:12.8px;font-weight:normal;font-style:normal;color:#111;letter-spacing:-0.083px;;-webkit-text-stroke:.15px #111">General</div>
<div class="t" style="left:642.00px;top:195.00px;font-size:12.8px;line-height:12.8px;font-weight:normal;font-style:normal;color:#111;letter-spacing:0.286px;;-webkit-text-stroke:.15px #111">Settings</div>
<div class="t" style="left:566.70px;top:234.00px;font-size:13.3px;line-height:13.3px;font-weight:bold;font-style:normal;color:#000;letter-spacing:0.676px;;-webkit-text-stroke:.3px #000">Headercontent Item</div>
<div class="a" style="left:567px;top:255px;width:103px;height:32px;background:#d8d8d8;border:1px solid #ababab;border-radius:2px;box-shadow:inset 0 1px 2px rgba(0,0,0,.05)"></div>
<svg class="a" style="left:567px;top:255px;" width="32" height="32" viewBox="0 0 32 32"><path d="M15.4 11v10M10.4 16h10" stroke="#000" stroke-width="1.7"/></svg>
<div class="t" style="left:593.70px;top:264.00px;font-size:13px;line-height:13px;font-weight:normal;font-style:normal;color:#333;letter-spacing:0.100px;;-webkit-text-stroke:.15px #333">Create new</div>
<div class="a" style="left:567px;top:302px;width:1316px;height:864px;background:#fafafa;border:1px solid #cdcdcd;box-shadow:0 2px 1px -0.5px rgba(0,0,0,.1)"></div>
<div class="a" style="left:567px;top:302px;width:1316px;height:38px;background:#dddddd;border:1px solid #cdcdcd"></div>
<svg class="a" style="left:570px;top:313px;" width="16" height="16" viewBox="0 0 16 16"><path d="M5 6.5h8L9 10.7z" fill="#555"/></svg>
<svg class="a" style="left:588px;top:313px;" width="16" height="16" viewBox="0 0 16 16"><rect x="0.5" y="0.5" width="15" height="15" fill="#ddd" stroke="#bbb" stroke-width=".8"/><rect x="1.5" y="1.5" width="13" height="13" fill="#c9dcf5"/><path d="M1.5 14.5c1.5-3 3-4 5.5-4s4 1 5.5 4z" fill="#4ca84c"/><circle cx="7" cy="6.5" r="1.8" fill="#fff"/><circle cx="5.2" cy="7.3" r="1.3" fill="#fff"/><circle cx="8.8" cy="7.3" r="1.3" fill="#fff"/><path d="M12 1.5h2.5v2.5z" fill="#fff"/></svg>
<div class="t" style="left:610.00px;top:314.00px;font-size:13.5px;line-height:13.5px;font-weight:normal;font-style:italic;color:#555;letter-spacing:0.222px;;-webkit-text-stroke:.15px #555">[No title]</div>
<div class="a" style="left:1720px;top:308px;width:50px;height:25px;background:#efefef;border:1px solid #c6c6c6;border-radius:2px;box-shadow:0 1px 0 rgba(0,0,0,.06)"></div>
<div class="a" style="left:1745px;top:308px;width:1px;height:25px;background:#c6c6c6"></div>
<svg class="a" style="left:1720px;top:309px;" width="25" height="25" viewBox="0 0 25 25"><rect x="5" y="6.8" width="15.8" height="10" rx="5" fill="#000"/><circle cx="16.6" cy="11.8" r="3.1" fill="#efefef"/></svg>
<svg class="a" style="left:1745px;top:309px;" width="25" height="25" viewBox="0 0 25 25"><rect x="10.4" y="4.9" width="4.8" height="2.4" rx=".8" fill="none" stroke="#000" stroke-width="1.1"/><path d="M7 7.6h11.8" stroke="#000" stroke-width="1.3"/><path d="M8.6 8.2l.7 10.2h7l.7-10.2" fill="none" stroke="#000" stroke-width="1.3"/><path d="M11.6 10.2v6.3M14 10.2v6.3" stroke="#000" stroke-width="1.1"/></svg>
<div class="a" style="left:1771px;top:308px;width:100px;height:25px;background:#e6e6e6;border:1px solid #c6c6c6;border-radius:2px;box-shadow:0 1px 0 rgba(0,0,0,.06)"></div>
<div class="a" style="left:1796px;top:308px;width:1px;height:25px;background:#c6c6c6"></div>
<div class="a" style="left:1821px;top:308px;width:1px;height:25px;background:#c6c6c6"></div>
<div class="a" style="left:1846px;top:308px;width:1px;height:25px;background:#c6c6c6"></div>
<div class="a" style="left:1796px;top:309px;width:25px;height:23px;background:#eeeeee"></div>
<div class="a" style="left:1796px;top:308px;width:1px;height:25px;background:#c6c6c6"></div>
<div class="a" style="left:1821px;top:308px;width:1px;height:25px;background:#c6c6c6"></div>
<svg class="a" style="left:1796px;top:309px;" width="25" height="25" viewBox="0 0 25 25"><path d="M13 6.6v10.4M7.8 11.8h10.4" stroke="#000" stroke-width="1.9"/></svg>
<div class="a" style="left:570px;top:348px;width:824px;height:81px;border:4px solid #e32424"></div>
<div class="t" style="left:580.40px;top:357.00px;font-size:13.3px;line-height:13.3px;font-weight:bold;font-style:normal;color:#000;letter-spacing:0.550px;;-webkit-text-stroke:.3px #000">Title</div>
<div class="a" style="left:580px;top:387px;width:804px;height:32px;background:#fff;border:1px solid #6daae0;border-radius:2px"></div>
<div class="a" style="left:567px;top:436px;width:1316px;height:1px;background:#d0d0d0"></div>
<div class="a" style="left:571px;top:446px;width:1309px;height:419px;border:4px solid #e32424"></div>
<div class="t" style="left:579.70px;top:454.00px;font-size:13.3px;line-height:13.3px;font-weight:bold;font-style:normal;color:#000;letter-spacing:0.413px;;-webkit-text-stroke:.3px #000">Description Text</div>
<div class="a" style="left:580px;top:484px;width:1290px;height:371px;background:#f8f8f8;border:1px solid #c4c4c4"></div>
<div class="a" style="left:581px;top:526px;width:1288px;height:302px;background:#fff;border-top:1px solid #d1d1d1;border-bottom:1px solid #d1d1d1"></div>
<svg class="a" style="left:1854px;top:838px;" width="12" height="12" viewBox="0 0 12 12"><path d="M11 1v10H1z" fill="#999"/></svg>
<div class="a" style="left:619px;top:496px;width:1px;height:18px;background:#d0d0d0"></div>
<div class="a" style="left:718px;top:496px;width:1px;height:18px;background:#d0d0d0"></div>
<div class="a" style="left:815px;top:496px;width:1px;height:18px;background:#d0d0d0"></div>
<div class="a" style="left:911px;top:496px;width:1px;height:18px;background:#d0d0d0"></div>
<div class="a" style="left:1000px;top:496px;width:1px;height:18px;background:#d0d0d0"></div>
<div class="a" style="left:1145px;top:496px;width:1px;height:18px;background:#d0d0d0"></div>
<div class="a" style="left:1234px;top:496px;width:1px;height:18px;background:#d0d0d0"></div>
<div class="a" style="left:1379px;top:496px;width:1px;height:18px;background:#d0d0d0"></div>
<svg class="a" style="left:595px;top:497px;" width="18" height="18" viewBox="0 0 18 18"><path d="M3.5 2.5h9.5l-.3 2h-3.3L7.5 12.5h-2.3l1.9-8H4z" fill="#333"/><path d="M1.5 14.8h6" stroke="#333" stroke-width="1"/><path d="M10.8 11.8l4 4M14.8 11.8l-4 4" stroke="#333" stroke-width="1.3"/></svg>
<div class="t" style="left:633.50px;top:499.00px;font-size:12px;line-height:12px;font-weight:normal;font-style:normal;color:#333;letter-spacing:-0.200px;;-webkit-text-stroke:.15px #333">Format</div>
<svg class="a" style="left:700px;top:497px;" width="12" height="18" viewBox="0 0 12 18"><path d="M3 8h6l-3 3z" fill="#444"/></svg>
<div class="t" style="left:730.30px;top:499.00px;font-size:12px;line-height:12px;font-weight:normal;font-style:normal;color:#333;letter-spacing:-0.200px;;-webkit-text-stroke:.15px #333">Styles</div>
<svg class="a" style="left:797px;top:497px;" width="12" height="18" viewBox="0 0 12 18"><path d="M3 8h6l-3 3z" fill="#444"/></svg>
<svg class="a" style="left:823px;top:497px;" width="18" height="18" viewBox="0 0 18 18"><rect x="2.6" y="4.6" width="14" height="6" rx="3" fill="none" stroke="#333" stroke-width="1.5"/><path d="M6.5 7.6h6" stroke="#333" stroke-width="1.5"/></svg>
<svg class="a" style="left:851px;top:497px;" width="18" height="18" viewBox="0 0 18 18"><rect x="2.8" y="4.7" width="8" height="5.2" rx="2.6" fill="none" stroke="#bbb" stroke-width="1.3"/><rect x="7.2" y="4.7" width="8" height="5.2" rx="2.6" fill="none" stroke="#bbb" stroke-width="1.3"/><path d="M10.5 10.5l4 4M14.5 10.5l-4 4" stroke="#bbb" stroke-width="1.3"/></svg>
<svg class="a" style="left:879px;top:497px;" width="18" height="18" viewBox="0 0 18 18"><rect x="0.6" y="1.6" width="15" height="13.4" fill="none" stroke="#333" stroke-width="1.2"/><rect x="0" y="1" width="16" height="2.2" fill="#333"/><path d="M5.6 2v13M10.6 2v13M1 6.6h15M1 10.8h15" stroke="#333" stroke-width="1.1"/></svg>
<svg class="a" style="left:896px;top:497px;" width="10" height="18" viewBox="0 0 10 18"><path d="M2 7.5h6l-3 3z" fill="#444"/></svg>
<svg class="a" style="left:922px;top:497px;" width="18" height="18" viewBox="0 0 18 18"><rect x="0" y="3.0" width="7" height="1.5" fill="#333"/><rect x="0" y="5.9" width="12" height="1.5" fill="#333"/><rect x="0" y="8.8" width="7" height="1.5" fill="#333"/><rect x="0" y="11.7" width="12" height="1.5" fill="#333"/></svg>
<svg class="a" style="left:950px;top:497px;" width="18" height="18" viewBox="0 0 18 18"><rect x="2.5" y="3.0" width="7" height="1.5" fill="#333"/><rect x="0" y="5.9" width="12" height="1.5" fill="#333"/><rect x="2.5" y="8.8" width="7" height="1.5" fill="#333"/><rect x="0" y="11.7" width="12" height="1.5" fill="#333"/></svg>
<svg class="a" style="left:978px;top:497px;" width="18" height="18" viewBox="0 0 18 18"><rect x="5" y="3.0" width="7" height="1.5" fill="#333"/><rect x="0" y="5.9" width="12" height="1.5" fill="#333"/><rect x="5" y="8.8" width="7" height="1.5" fill="#333"/><rect x="0" y="11.7" width="12" height="1.5" fill="#333"/></svg>
<div class="t" style="left:1011.50px;top:498.00px;font-size:16px;line-height:16px;font-weight:bold;font-style:normal;color:#333;letter-spacing:0.000px;;-webkit-text-stroke:.3px #333">B</div>
<svg class="a" style="left:1040px;top:497px;" width="12" height="16" viewBox="0 0 12 16"><path d="M4.3 2h6.2l-.3 1.4H8.6L6.3 12.6h1.6l-.3 1.4H1.4l.3-1.4h1.6L5.6 3.4H4z" fill="#333"/></svg>
<div class="t" style="left:1067.50px;top:497.00px;font-size:15px;line-height:15px;font-weight:bold;font-style:normal;color:#333;letter-spacing:0.000px;;-webkit-text-stroke:.3px #333">U</div>
<div class="a" style="left:1067.5px;top:511.3px;width:11.5px;height:1px;background:#333"></div>
<div class="t" style="left:1095.50px;top:498.00px;font-size:15.5px;line-height:15.5px;font-weight:bold;font-style:normal;color:#333;letter-spacing:0.000px;;-webkit-text-stroke:.3px #333">S</div>
<div class="a" style="left:1094px;top:504.6px;width:14px;height:1.2px;background:#333"></div>
<svg class="a" style="left:1121px;top:497px;" width="18" height="18" viewBox="0 0 18 18"><path d="M4 4.5a2.4 2.4 0 1 1 0 4.8c0 2.2-1.5 3.6-3 4.3l-.3-.5c1.2-.9 1.8-1.8 1.9-3.1A2.4 2.4 0 0 1 4 4.5zM11.5 4.5a2.4 2.4 0 1 1 0 4.8c0 2.2-1.5 3.6-3 4.3l-.3-.5c1.2-.9 1.8-1.8 1.9-3.1a2.4 2.4 0 0 1 1.4-5.5z" fill="#333"/></svg>
<svg class="a" style="left:1155px;top:497px;" width="18" height="18" viewBox="0 0 18 18"><path d="M1.8 3.2h1v3" stroke="#333" stroke-width=".9" fill="none"/><path d="M1 9.5h2.2v1.6H1.4v1.9h2.2" stroke="#333" stroke-width=".9" fill="none"/><rect x="5" y="3.4" width="8" height="1.3" fill="#333"/><rect x="5" y="6.2" width="8" height="1.3" fill="#333"/><rect x="5" y="9.6" width="8" height="1.3" fill="#333"/><rect x="5" y="12.4" width="8" height="1.3" fill="#333"/></svg>
<svg class="a" style="left:1184px;top:497px;" width="18" height="18" viewBox="0 0 18 18"><circle cx="2" cy="5.1" r="1.6" fill="#333"/><circle cx="2" cy="11.4" r="1.6" fill="#333"/><rect x="5" y="3.4" width="8" height="1.3" fill="#333"/><rect x="5" y="6.2" width="8" height="1.3" fill="#333"/><rect x="5" y="9.6" width="8" height="1.3" fill="#333"/><rect x="5" y="12.4" width="8" height="1.3" fill="#333"/></svg>
<svg class="a" style="left:1211px;top:497px;" width="18" height="18" viewBox="0 0 18 18"><path d="M0 8.2h4.5" stroke="#333" stroke-width="1"/><path d="M3.5 6.5l1.8 1.7-1.8 1.7z" fill="#333"/><rect x="6" y="1.8" width="1" height="13" fill="#333"/><rect x="8.2" y="2.8" width="6" height="1.1" fill="#333"/><rect x="8.2" y="5.3" width="4" height="1.1" fill="#333"/><rect x="8.2" y="7.7" width="6" height="1.1" fill="#333"/><rect x="8.2" y="10.2" width="4" height="1.1" fill="#333"/><rect x="8.2" y="12.7" width="6" height="1.1" fill="#333"/><rect x="2" y="3" width="1" height="1" fill="#333"/><rect x="2" y="12.5" width="1" height="1" fill="#333"/></svg>
<svg class="a" style="left:1244px;top:497px;" width="18" height="18" viewBox="0 0 18 18"><path d="M4 1.5l6.5 10M11 1.5L4.5 11.5" stroke="#c0c0c0" stroke-width="1.5"/><circle cx="3.6" cy="13.2" r="1.9" fill="none" stroke="#c0c0c0" stroke-width="1.1"/><circle cx="11.4" cy="13.2" r="1.9" fill="none" stroke="#c0c0c0" stroke-width="1.1"/></svg>
<svg class="a" style="left:1271px;top:497px;" width="18" height="18" viewBox="0 0 18 18"><path d="M1 9.5V1h5l1 1" fill="none" stroke="#c8c8c8" stroke-width="1"/><path d="M4.5 5.5h5.5l3.2 3.2v6.8H4.5z" fill="none" stroke="#c8c8c8" stroke-width="1"/></svg>
<svg class="a" style="left:1300px;top:497px;" width="18" height="18" viewBox="0 0 18 18"><path d="M3.5 2.8H1.6v11.8h2" fill="none" stroke="#333" stroke-width="1.1"/><path d="M10.2 2.8h1.8v3.5" fill="none" stroke="#333" stroke-width="1.1"/><rect x="4.2" y="1.3" width="5.4" height="2.4" rx=".8" fill="#333"/><rect x="5" y="7" width="8.5" height="8.5" fill="none" stroke="#333" stroke-width="1.1"/><path d="M6.8 9.5h5M6.8 11.3h5M6.8 13.1h5" stroke="#333" stroke-width=".9"/></svg>
<svg class="a" style="left:1328px;top:497px;" width="18" height="18" viewBox="0 0 18 18"><path d="M3.5 2.8H1.6v11.8h2" fill="none" stroke="#333" stroke-width="1.1"/><path d="M10.2 2.8h1.8v3.5" fill="none" stroke="#333" stroke-width="1.1"/><rect x="4.2" y="1.3" width="5.4" height="2.4" rx=".8" fill="#333"/><rect x="5" y="7" width="8.5" height="8.5" fill="none" stroke="#333" stroke-width="1.1"/><path d="M7 9.5h5M9.5 9.5v4.5" stroke="#333" stroke-width="1.1"/></svg>
<svg class="a" style="left:1356px;top:497px;" width="18" height="18" viewBox="0 0 18 18"><path d="M3.5 2.8H1.6v11.8h2" fill="none" stroke="#333" stroke-width="1.1"/><path d="M10.2 2.8h1.8v3.5" fill="none" stroke="#333" stroke-width="1.1"/><rect x="4.2" y="1.3" width="5.4" height="2.4" rx=".8" fill="#333"/><rect x="5" y="7" width="8.5" height="8.5" fill="none" stroke="#333" stroke-width="1.1"/><path d="M6.8 9.3l1 4.8 1.5-3.3 1.5 3.3 1-4.8" fill="none" stroke="#333" stroke-width="1"/></svg>
<svg class="a" style="left:1388px;top:497px;" width="18" height="18" viewBox="0 0 18 18"><path d="M6.5 4L1.5 8.2l5 4.2V9.8c3.2-.2 5.6.8 7.5 3.5-.5-3.8-3-6.8-7.5-7z" fill="#c4c4c4"/></svg>
<svg class="a" style="left:1416px;top:497px;" width="18" height="18" viewBox="0 0 18 18"><path d="M9.5 4l5 4.2-5 4.2V9.8c-3.2-.2-5.6.8-7.5 3.5.5-3.8 3-6.8 7.5-7z" fill="#c4c4c4"/></svg>
<svg class="a" style="left:1444px;top:497px;" width="18" height="18" viewBox="0 0 18 18"><path d="M1.5 2h9M1.5 2v10M1.5 12h9M10.5 2v10" stroke="#333" stroke-width="1" stroke-dasharray="1 1" fill="none"/><rect x="1.5" y="13.3" width="9" height="2.5" rx="1.2" fill="none" stroke="#333" stroke-width="1"/><rect x="12" y="1.8" width="3" height="14" rx="1.5" fill="none" stroke="#333" stroke-width="1"/></svg>
<svg class="a" style="left:1472px;top:497px;" width="18" height="18" viewBox="0 0 18 18"><path d="M1.8 1.3h6.5l3.5 3.8v10.2H1.8z" fill="none" stroke="#333" stroke-width="1"/><path d="M8.3 1.3v3.8h3.5" fill="none" stroke="#333" stroke-width=".9"/><path d="M5.5 7.2L3.8 9.3l1.7 2.1M8.1 7.2l1.7 2.1-1.7 2.1" fill="none" stroke="#333" stroke-width="1"/></svg>
<div class="t" style="left:1491.30px;top:499.00px;font-size:12px;line-height:12px;font-weight:normal;font-style:normal;color:#333;letter-spacing:-0.200px;;-webkit-text-stroke:.15px #333">Source</div>
<svg class="a" style="left:1540px;top:497px;" width="18" height="18" viewBox="0 0 18 18"><text x="0.5" y="7.3" font-family="Liberation Sans" font-size="8" font-weight="bold" fill="#333" textLength="15" lengthAdjust="spacingAndGlyphs">ABC</text><path d="M4.5 11l3 3 6.5-6" fill="none" stroke="#333" stroke-width="1.8"/></svg>
<svg class="a" style="left:1557px;top:497px;" width="10" height="18" viewBox="0 0 10 18"><path d="M2 7.5h6l-3 3z" fill="#444"/></svg>
<div class="a" style="left:567px;top:872px;width:1316px;height:1px;background:#d0d0d0"></div>
<div class="a" style="left:571px;top:882px;width:422px;height:125px;border:4px solid #e32424"></div>
<div class="t" style="left:579.70px;top:890.00px;font-size:13.3px;line-height:13.3px;font-weight:bold;font-style:normal;color:#000;letter-spacing:0.700px;;-webkit-text-stroke:.3px #000">Images</div>
<div class="a" style="left:580px;top:920px;width:80px;height:32px;background:#eeeeee;border:1px solid #c4c4c4;border-radius:2px"></div>
<svg class="a" style="left:580px;top:920px;" width="32" height="32" viewBox="0 0 32 32"><path d="M8.4 11.6h5.4l1.2 1.9h6.8v7.3H8.4z" fill="none" stroke="#000" stroke-width="1.2"/></svg>
<div class="t" style="left:607.60px;top:929.00px;font-size:13.3px;line-height:13.3px;font-weight:normal;font-style:normal;color:#333;letter-spacing:0.129px;;-webkit-text-stroke:.15px #333">Add file</div>
<div class="a" style="left:664px;top:920px;width:157px;height:32px;background:#eeeeee;border:1px solid #c4c4c4;border-radius:2px"></div>
<svg class="a" style="left:664px;top:920px;" width="32" height="32" viewBox="0 0 32 32"><path d="M8 17.5v3.5h13.5v-3.5h-4.5" fill="none" stroke="#000" stroke-width="1.1"/><path d="M12.2 17.5H8" stroke="#000" stroke-width="1.1"/><path d="M14.6 10l-3 3h2v5.5h2V13h2z" fill="#000"/><rect x="18" y="19" width="1" height="1" fill="#000"/><rect x="20" y="19" width="1" height="1" fill="#000"/></svg>
<div class="t" style="left:691.30px;top:929.00px;font-size:13.3px;line-height:13.3px;font-weight:normal;font-style:normal;color:#333;letter-spacing:0.045px;;-webkit-text-stroke:.15px #333">Select &amp; upload files</div>
<div class="t" style="left:580.40px;top:963.00px;font-size:13.3px;line-height:13.3px;font-weight:normal;font-style:normal;color:#5b9fe0;letter-spacing:0.068px;">Allowed file extensions</div>
<div class="a" style="left:580px;top:981px;width:28px;height:16px;background:#79a548;border-radius:2px"></div>
<div class="t" style="left:585.20px;top:985.00px;font-size:9.2px;line-height:9.2px;font-weight:bold;font-style:normal;color:#fff;letter-spacing:1.000px;-webkit-text-stroke:.15px #fff">GIF</div>
<div class="a" style="left:612px;top:981px;width:29px;height:16px;background:#79a548;border-radius:2px"></div>
<div class="t" style="left:617.20px;top:985.00px;font-size:9.2px;line-height:9.2px;font-weight:bold;font-style:normal;color:#fff;letter-spacing:0.500px;-webkit-text-stroke:.15px #fff">JPG</div>
<div class="a" style="left:645px;top:981px;width:35px;height:16px;background:#79a548;border-radius:2px"></div>
<div class="t" style="left:650.20px;top:985.00px;font-size:9.2px;line-height:9.2px;font-weight:bold;font-style:normal;color:#fff;letter-spacing:0.000px;-webkit-text-stroke:.15px #fff">JPEG</div>
<div class="a" style="left:685px;top:981px;width:27px;height:16px;background:#79a548;border-radius:2px"></div>
<div class="t" style="left:690.20px;top:985.00px;font-size:9.2px;line-height:9.2px;font-weight:bold;font-style:normal;color:#fff;letter-spacing:1.500px;-webkit-text-stroke:.15px #fff">TIF</div>
<div class="a" style="left:716px;top:981px;width:33px;height:16px;background:#79a548;border-radius:2px"></div>
<div class="t" style="left:721.20px;top:985.00px;font-size:9.2px;line-height:9.2px;font-weight:bold;font-style:normal;color:#fff;letter-spacing:1.000px;-webkit-text-stroke:.15px #fff">TIFF</div>
<div class="a" style="left:753px;top:981px;width:32px;height:16px;background:#79a548;border-radius:2px"></div>
<div class="t" style="left:758.20px;top:985.00px;font-size:9.2px;line-height:9.2px;font-weight:bold;font-style:normal;color:#fff;letter-spacing:1.000px;-webkit-text-stroke:.15px #fff">BMP</div>
<div class="a" style="left:789px;top:981px;width:30px;height:16px;background:#79a548;border-radius:2px"></div>
<div class="t" style="left:794.20px;top:985.00px;font-size:9.2px;line-height:9.2px;font-weight:bold;font-style:normal;color:#fff;letter-spacing:0.500px;-webkit-text-stroke:.15px #fff">PCX</div>
<div class="a" style="left:823px;top:981px;width:31px;height:16px;background:#79a548;border-radius:2px"></div>
<div class="t" style="left:828.20px;top:985.00px;font-size:9.2px;line-height:9.2px;font-weight:bold;font-style:normal;color:#fff;letter-spacing:0.500px;-webkit-text-stroke:.15px #fff">TGA</div>
<div class="a" style="left:858px;top:981px;width:31px;height:16px;background:#79a548;border-radius:2px"></div>
<div class="t" style="left:863.20px;top:985.00px;font-size:9.2px;line-height:9.2px;font-weight:bold;font-style:normal;color:#fff;letter-spacing:0.500px;-webkit-text-stroke:.15px #fff">PNG</div>
<div class="a" style="left:893px;top:981px;width:30px;height:16px;background:#79a548;border-radius:2px"></div>
<div class="t" style="left:898.20px;top:985.00px;font-size:9.2px;line-height:9.2px;font-weight:bold;font-style:normal;color:#fff;letter-spacing:0.500px;-webkit-text-stroke:.15px #fff">PDF</div>
<div class="a" style="left:928px;top:981px;width:21px;height:16px;background:#79a548;border-radius:2px"></div>
<div class="t" style="left:933.20px;top:985.00px;font-size:9.2px;line-height:9.2px;font-weight:bold;font-style:normal;color:#fff;letter-spacing:2.000px;-webkit-text-stroke:.15px #fff">AI</div>
<div class="a" style="left:954px;top:981px;width:30px;height:16px;background:#79a548;border-radius:2px"></div>
<div class="t" style="left:959.20px;top:985.00px;font-size:9.2px;line-height:9.2px;font-weight:bold;font-style:normal;color:#fff;letter-spacing:0.500px;-webkit-text-stroke:.15px #fff">SVG</div>
<div class="a" style="left:567px;top:1032px;width:1316px;height:1px;background:#d0d0d0"></div>
<div class="t" style="left:580.40px;top:1049.00px;font-size:16.7px;line-height:16.7px;font-weight:normal;font-style:normal;color:#000;letter-spacing:0.024px;;-webkit-text-stroke:.15px #000">Headercontent Position</div>
<div class="t" style="left:580.40px;top:1076.00px;font-size:13.3px;line-height:13.3px;font-weight:bold;font-style:normal;color:#000;letter-spacing:0.227px;;-webkit-text-stroke:.3px #000">Accent-Color</div>
<div class="a" style="left:580px;top:1106px;width:300px;height:32px;background:#fff;border:1px solid #6daae0;border-radius:2px"></div>
<div class="t" style="left:587.40px;top:1115.00px;font-size:13.3px;line-height:13.3px;font-weight:normal;font-style:normal;color:#333;letter-spacing:0.217px;;-webkit-text-stroke:.15px #333">primary color</div>
<svg class="a" style="left:860px;top:1114px;" width="16" height="16" viewBox="0 0 16 16"><path d="M3.5 5.8l4 4 4-4" fill="none" stroke="#000" stroke-width="1.8"/></svg>
<div class="t" style="left:910.20px;top:1076.00px;font-size:13.3px;line-height:13.3px;font-weight:bold;font-style:normal;color:#000;letter-spacing:0.438px;;-webkit-text-stroke:.3px #000">Vertical Position</div>
<div class="a" style="left:910px;top:1106px;width:300px;height:32px;background:#fff;border:1px solid #6daae0;border-radius:2px"></div>
<div class="t" style="left:917.40px;top:1115.00px;font-size:13.3px;line-height:13.3px;font-weight:normal;font-style:normal;color:#333;letter-spacing:0.240px;;-webkit-text-stroke:.15px #333">middle</div>
<svg class="a" style="left:1190px;top:1114px;" width="16" height="16" viewBox="0 0 16 16"><path d="M3.5 5.8l4 4 4-4" fill="none" stroke="#000" stroke-width="1.8"/></svg>
<div class="t" style="left:1240.00px;top:1076.00px;font-size:13.3px;line-height:13.3px;font-weight:bold;font-style:normal;color:#000;letter-spacing:0.389px;;-webkit-text-stroke:.3px #000">Horizontal Position</div>
<div class="a" style="left:1240px;top:1106px;width:300px;height:32px;background:#fff;border:1px solid #6daae0;border-radius:2px"></div>
<div class="t" style="left:1247.40px;top:1115.00px;font-size:13.3px;line-height:13.3px;font-weight:normal;font-style:normal;color:#333;letter-spacing:-0.080px;;-webkit-text-stroke:.15px #333">center</div>
<svg class="a" style="left:1520px;top:1114px;" width="16" height="16" viewBox="0 0 16 16"><path d="M3.5 5.8l4 4 4-4" fill="none" stroke="#000" stroke-width="1.8"/></svg>
<div class="t" style="left:1570.00px;top:1076.00px;font-size:13.3px;line-height:13.3px;font-weight:bold;font-style:normal;color:#000;letter-spacing:0.471px;;-webkit-text-stroke:.3px #000">Headercontent Size</div>
<div class="a" style="left:1570px;top:1106px;width:300px;height:32px;background:#fff;border:1px solid #6daae0;border-radius:2px"></div>
<div class="t" style="left:1577.40px;top:1115.00px;font-size:13.3px;line-height:13.3px;font-weight:normal;font-style:normal;color:#333;letter-spacing:0.444px;;-webkit-text-stroke:.15px #333">half (50%)</div>
<svg class="a" style="left:1850px;top:1114px;" width="16" height="16" viewBox="0 0 16 16"><path d="M3.5 5.8l4 4 4-4" fill="none" stroke="#000" stroke-width="1.8"/></svg>
<svg class="a" style="left:1750px;top:1195px;" width="14" height="10" viewBox="0 0 14 10"><rect x=".5" y=".5" width="13" height="10" fill="#fff" stroke="#777"/><rect x="2" y="2" width="10" height="1.6" fill="#444"/></svg>
<div class="t" style="left:1770.50px;top:1195.00px;font-size:13px;line-height:13px;font-weight:bold;font-style:normal;color:#5b9fe0;letter-spacing:0.455px;;-webkit-text-stroke:.3px #5b9fe0">Page Content</div>
<div class="t" style="left:1864.40px;top:1195.00px;font-size:13px;line-height:13px;font-weight:bold;font-style:normal;color:#a30000;letter-spacing:0.000px;;-webkit-text-stroke:.3px #a30000">NEW</div></body></html>
